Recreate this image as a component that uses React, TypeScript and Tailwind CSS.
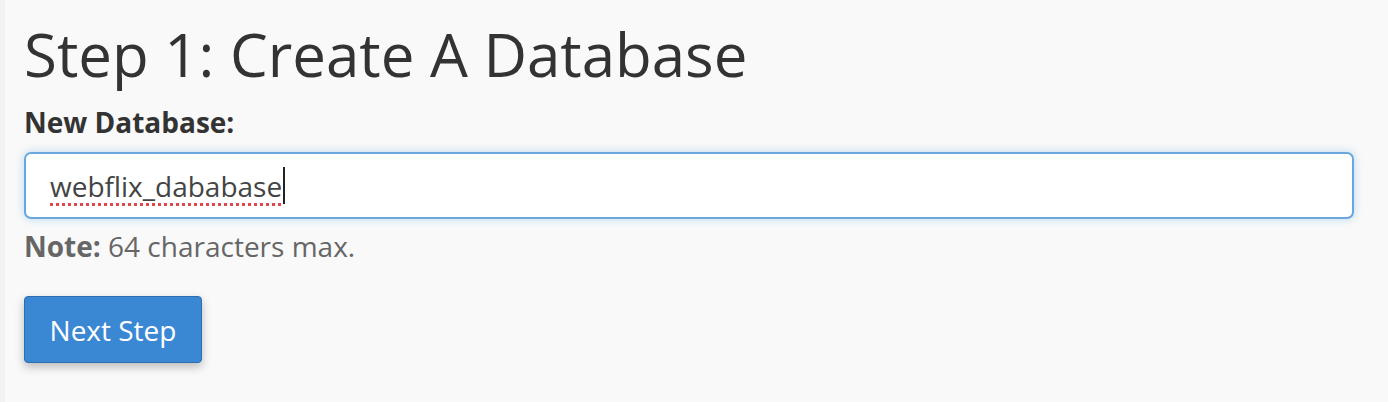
export default function App() {
  return (
    <div
      className="flex h-[402px] w-[1388px] bg-[#f9f9f9] text-[#333]"
      style={{ fontFamily: '"Open Sans", "Noto Sans", sans-serif' }}
    >
      <div className="w-[5px] bg-[#f2f2f2]" />
      <div className="flex flex-1 flex-col pl-[19px] pr-[34px]">
        <h1 className="mt-[19px] text-[60px] leading-[70px] font-normal text-[#333]">
          Step 1: Create A Database
        </h1>
        <label className="mt-[15px] text-[28px] leading-[36px] font-bold text-[#333]">
          New Database:
        </label>
        <div className="mt-[12px] flex h-[67px] items-center rounded-[7px] border-2 border-[#6aa7de] bg-white pl-[24px] shadow-[0_0_8px_rgba(102,175,233,0.45)]">
          <span className="text-[28px] leading-[38px] text-[#444] underline decoration-[#e0474c] decoration-dotted decoration-[3px] underline-offset-[6px]">
            webflix_dababase
          </span>
          <span className="ml-[1px] h-[37px] w-[2px] bg-[#222]" />
        </div>
        <p className="mt-[9px] text-[28px] leading-[36px] text-[#666]">
          <span className="font-bold">Note:</span> 64 characters max.
        </p>
        <div className="mt-[32px]">
          <button className="h-[67px] w-[178px] rounded-[4px] border border-[#2b6fb0] bg-[#3a88d4] text-[28px] leading-[38px] text-white shadow-[0_4px_10px_rgba(0,0,0,0.25)]">
            Next Step
          </button>
        </div>
      </div>
    </div>
  );
}
